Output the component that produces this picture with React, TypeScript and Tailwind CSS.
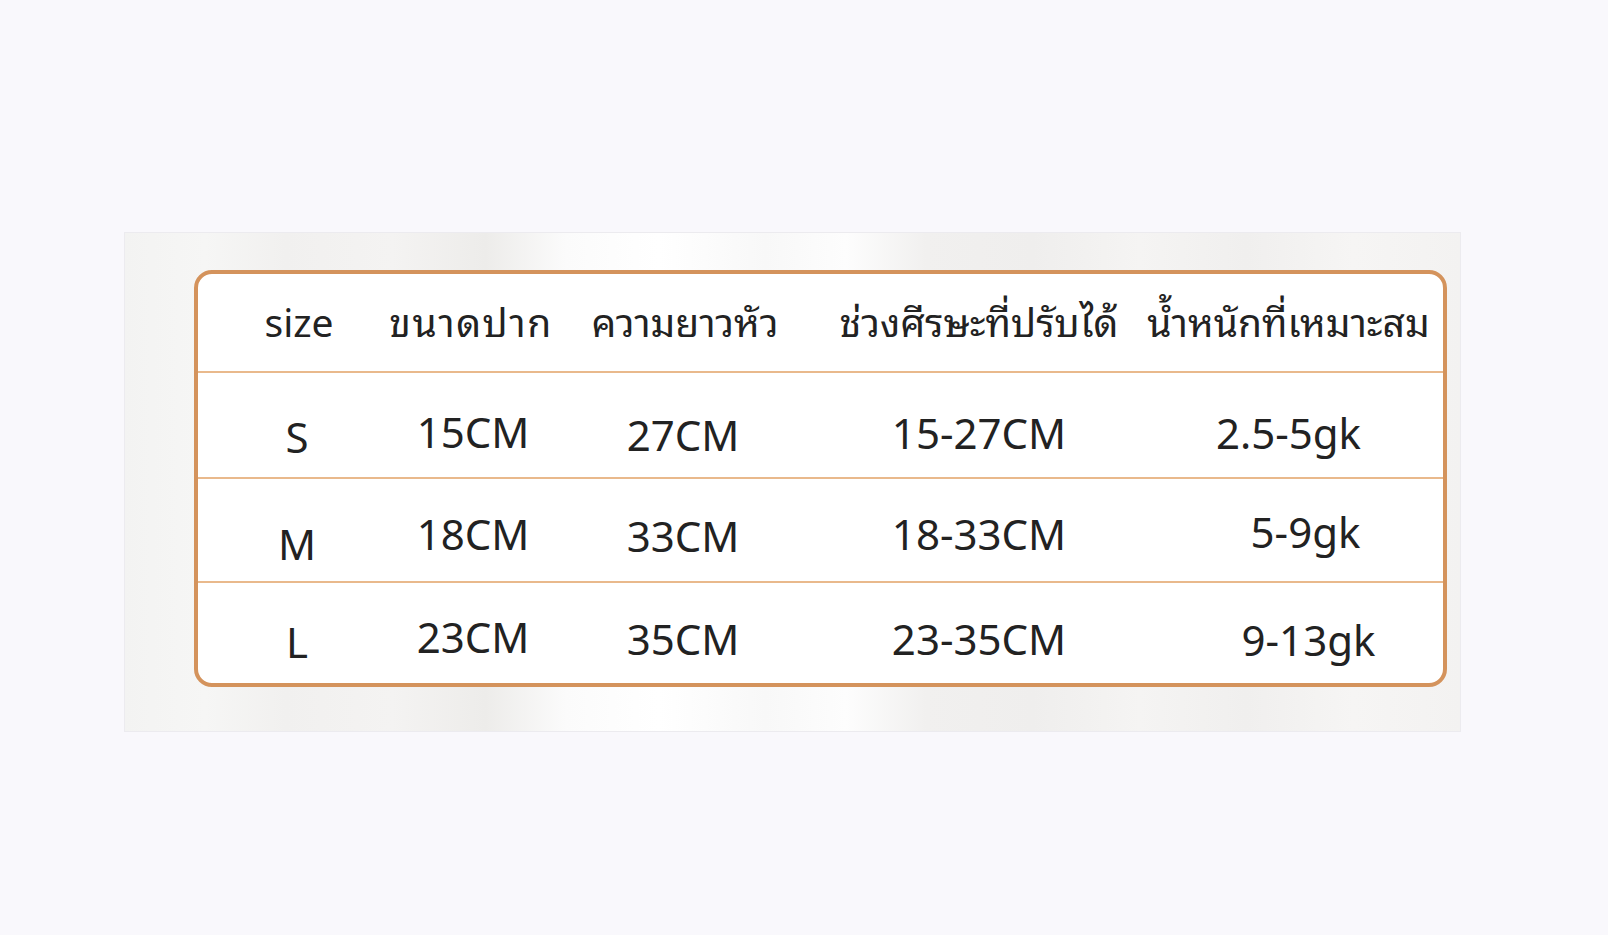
const font = { fontFamily: '"Noto Sans", "Noto Sans Thai Looped", "Noto Sans Thai", "DejaVu Sans", sans-serif' };

const headers = [
  { t: "size", c: "pl-[4px]" },
  { t: "ขนาดปาก", c: "tracking-[1.5px]" },
  { t: "ความยาวหัว", c: "pl-[4px]" },
  { t: "ช่วงศีรษะที่ปรับได้", c: "pl-[4px]" },
  { t: "น้ำหนักที่เหมาะสม", c: "" },
];

// column widths chosen so the text centres line up with the picture
const colW = ["w-[198px]", "w-[150px]", "w-[274px]", "w-[314px]", "w-[309px]"];

const rows = [
  {
    h: "h-[104px]",
    cells: [
      { t: "S", c: "pt-[22px]" },
      { t: "15CM", c: "pt-[12px] pl-[4px]" },
      { t: "27CM", c: "pt-[18px]" },
      { t: "15-27CM", c: "pt-[14px] pl-[4px]" },
      { t: "2.5-5gk", c: "pt-[14px]" },
    ],
  },
  {
    h: "h-[102px]",
    cells: [
      { t: "M", c: "pt-[26px]" },
      { t: "18CM", c: "pt-[6px] pl-[4px]" },
      { t: "33CM", c: "pt-[10px]" },
      { t: "18-33CM", c: "pt-[6px] pl-[4px]" },
      { t: "5-9gk", c: "pt-[2px] pl-[34px]" },
    ],
  },
  {
    h: "h-[100px]",
    cells: [
      { t: "L", c: "pt-[16px]" },
      { t: "23CM", c: "pt-[6px] pl-[4px]" },
      { t: "35CM", c: "pt-[10px]" },
      { t: "23-35CM", c: "pt-[10px] pl-[4px]" },
      { t: "9-13gk", c: "pt-[12px] pl-[40px]" },
    ],
  },
];

function Cell({ w, className, children }: { w: string; className?: string; children: React.ReactNode }) {
  return (
    <div className={`${w} flex shrink-0 items-center justify-center whitespace-nowrap ${className ?? ""}`}>
      {children}
    </div>
  );
}

export default function App() {
  return (
    <div className="min-h-[935px] w-full bg-[#f9f8fc] pt-[232px] pl-[124px]" style={font}>
      <div className="w-[1337px] h-[500px] bg-[linear-gradient(90deg,#f3f3f2_0%,#f6f6f5_6%,#f1f0ef_12%,#f4f3f2_20%,#edecea_27%,#fbfbfb_33%,#ffffff_40%,#f8f8f8_48%,#fdfdfd_54%,#f1f0ef_60%,#efeeed_68%,#f5f4f3_76%,#f0efee_84%,#f6f5f4_92%,#f3f2f1_100%)] border border-[#ecebef] pt-[37px] pl-[69px]">
        <div className="w-[1253px] h-[417px] rounded-[18px] border-4 border-[#d4935c] bg-white overflow-hidden text-[#222]">
          <div className="flex h-[97px] text-[39px]">
            {headers.map((h, i) => (
              <Cell key={h.t} w={colW[i]} className={h.c}>
                {h.t}
              </Cell>
            ))}
          </div>
          {rows.map((r, ri) => (
            <div key={ri}>
              <div className="h-[2px] bg-[#e9b98c]" />
              <div className={`flex ${r.h} text-[42px]`}>
                {r.cells.map((c, i) => (
                  <Cell key={i} w={colW[i]} className={c.c}>
                    {c.t}
                  </Cell>
                ))}
              </div>
            </div>
          ))}
        </div>
      </div>
    </div>
  );
}
